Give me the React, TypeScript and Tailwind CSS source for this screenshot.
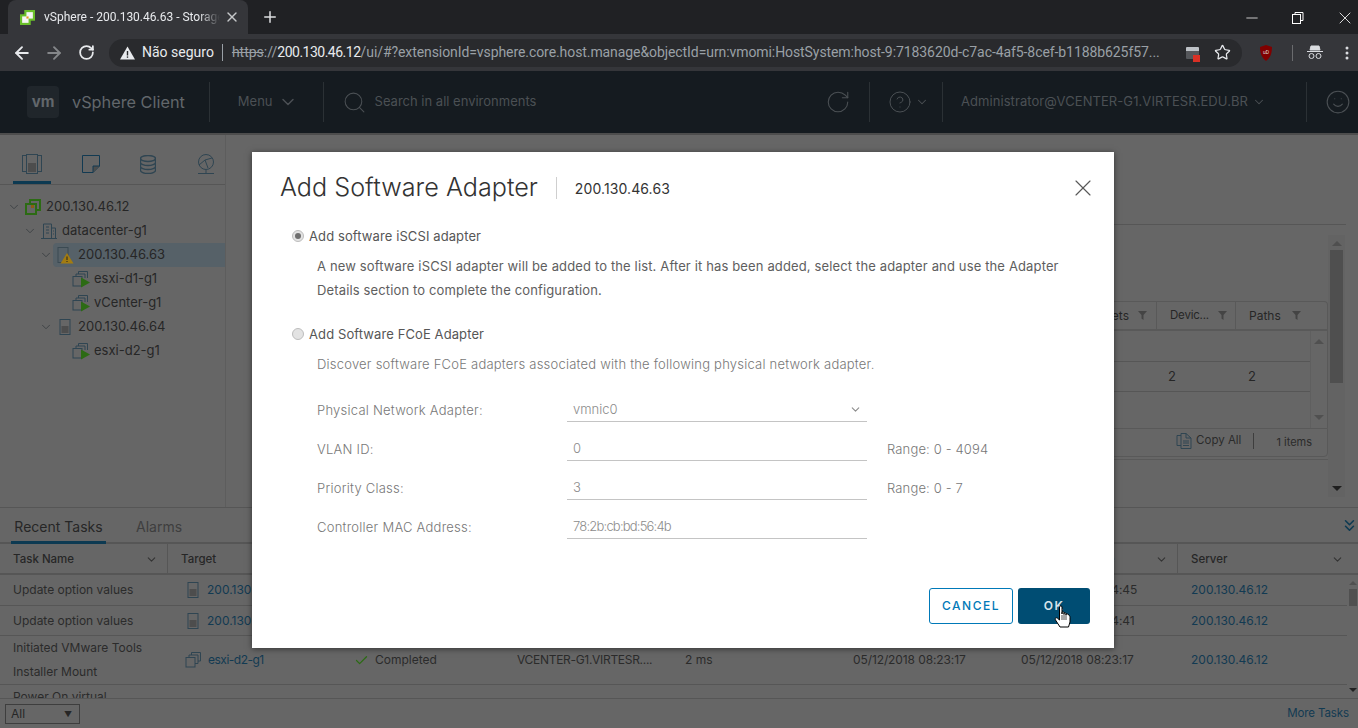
import { ArrowLeft, ArrowRight, RotateCw, Star, ChevronDown, X, Plus, Search, Check, Minus, Smile, HelpCircle, ChevronsDown } from 'lucide-react';

const Server = () => (
    <svg width="12" height="16" viewBox="0 0 12 16" className="shrink-0" fill="none">
        <rect x="1" y="0.5" width="10" height="15" stroke="#2f4552" />
        <rect x="2.5" y="7" width="7" height="7" fill="#4d4d4d" />
    </svg>
);

const Vm = ({ play = true }: { play?: boolean }) => (
    <svg width="18" height="17" viewBox="0 0 18 17" fill="none" className="shrink-0">
        <path d={play ? 'M6.500 3V0.500H15.500V7' : 'M6.500 3V0.500H15.500V9H13'} stroke="#2f4552" />
        <path d={play ? 'M4 5V3H13V7' : 'M4 5V3H13V11.500H10'} stroke="#2f4552" />
        <rect x="1" y="5.500" width="9" height="9.500" stroke="#2f4552" />
        {play && <path d="M9 6.500 L18 11.500 L9 16.500 Z" fill="#2c6b14" />}
    </svg>
);

const FilterIcon = () => (
    <svg width="9" height="9" viewBox="0 0 9 9" className="shrink-0"><path d="M0 0H9L5.500 4V9L3.500 7.500V4Z" fill="#444" /></svg>
);

const TreeRow = ({ indent, chevron, icon, label, selected }: { indent: string; chevron?: boolean; icon: React.ReactNode; label: string; selected?: boolean }) => (
    <div className={`flex h-6 items-center ${indent}`}>
        <span className="flex w-[15px] shrink-0 justify-center">
            {chevron && <ChevronDown size={14} strokeWidth={1.5} className="text-[#3a3f42]" />}
        </span>
        <div className={`flex h-6 flex-1 items-center gap-[4px] rounded-l pl-[3px] ${selected ? 'bg-[#566168]' : ''}`}>
            <span className="flex w-[18px] shrink-0 justify-center">{icon}</span>
            <span className="text-[13px] text-[#262626]">{label}</span>
        </div>
    </div>
);

const HeaderCell = ({ label, width }: { label: string; width: string }) => (
    <div className={`flex h-full items-center justify-between border-r border-[#565656] pl-[13px] pr-[9px] pt-[2px] ${width}`}>
        <span className="text-[11.5px] font-medium text-[#262626]">{label}</span>
        <ChevronDown size={13} className="text-[#333]" />
    </div>
);

const TaskRow = ({ name, name2, target, vm, h, start }: { name: string; name2?: string; target: string; vm?: boolean; h: string; start: string }) => (
    <div className={`flex items-center border-b border-[#565656] text-[12px] text-[#2b2b2b] ${h}`}>
        <div className="w-[168px] shrink-0 pl-[13px] leading-6">
            <div>{name}</div>
            {name2 && <div>{name2}</div>}
        </div>
        <div className={`flex w-[168px] shrink-0 items-center text-[#123a52] ${vm ? 'gap-[5px] pl-[17px] tracking-[-0.5px]' : 'gap-[8px] pl-[19px]'}`}>
            {vm ? <Vm play={false} /> : <Server />}
            <span>{target}</span>
        </div>
        <div className="flex w-[168px] shrink-0 items-center gap-[6px] pl-[18px]">
            <Check size={15} className="text-[#2c6b14]" />
            <span>Completed</span>
        </div>
        <div className="w-[168px] shrink-0 pl-[13px] tracking-[-0.3px]">VCENTER-G1.VIRTESR....</div>
        <div className="w-[168px] shrink-0 pl-[13px]">2 ms</div>
        <div className="w-[168px] shrink-0 pl-[13px] tracking-[-0.1px]">{start}</div>
        <div className="w-[170px] shrink-0 pl-[13px] tracking-[-0.1px]">{start}</div>
        <div className="pl-[13px] text-[#123a52]">200.130.46.12</div>
    </div>
);

const Field = ({ label, value, hint, select, tight }: { label: string; value: string; hint?: string; select?: boolean; tight?: boolean }) => (
    <div className="flex h-[39px] items-center">
        <span className="w-[250px] text-[13px] font-light tracking-[0.24px] text-[#777]">{label}</span>
        <div className={`mt-[-1px] flex h-[23px] w-[300px] items-center justify-between border-b border-[#c4c4c4] pl-[6px] pr-[5px] text-[13px] font-light text-[#8c8c8c] ${tight ? 'tracking-[-0.8px]' : ''}`}>
            {value}
            {select && <ChevronDown size={13} className="text-[#8c8c8c]" />}
        </div>
        {hint && <span className="ml-[20px] text-[13px] font-light tracking-[0.15px] text-[#777]">{hint}</span>}
    </div>
);

const Radio = ({ checked }: { checked?: boolean }) => (
    <span className="mt-[-2px] flex h-3 w-3 items-center justify-center rounded-full border border-[#bdbdbd] bg-[#e3e3e3]">
        {checked && <span className="h-[6px] w-[6px] rounded-full bg-[#6f6f6f]" />}
    </span>
);

const HeaderSep = ({ className }: { className: string }) => <span className={`h-10 w-px bg-[#2b3135] ${className}`} />;

export default function App() {
    return (
        <div className="relative flex h-[728px] w-[1358px] flex-col overflow-hidden bg-[#666666] font-['Inter',sans-serif]">
            {/* browser tab strip */}
            <div className="flex h-[34px] items-start bg-[#202124] pl-[8px]">
                <div className="flex h-[34px] w-[240px] items-center rounded-t-lg bg-[#35363a] pl-[12px] pr-[8px] font-['Roboto',sans-serif]">
                    <svg width="15" height="15" viewBox="0 0 14 14" className="shrink-0">
                        <rect x="4" y="0" width="10" height="10" fill="#6abf2a" />
                        <rect x="0" y="4" width="10" height="10" fill="#6abf2a" />
                        <rect x="6" y="2" width="6" height="6" fill="#f5f5f5" />
                        <rect x="2" y="6" width="6" height="6" fill="#f5f5f5" />
                        <rect x="6" y="6" width="2" height="2" fill="#e39a1c" />
                    </svg>
                    <span className="ml-[9px] w-[176px] overflow-hidden whitespace-nowrap text-[12px] text-[#e8eaed] [mask-image:linear-gradient(to_right,black_88%,transparent)]">vSphere - 200.130.46.63 - Storage</span>
                    <X size={16} className="ml-auto text-[#c6c8ca]" />
                </div>
                <Plus size={18} strokeWidth={2} className="ml-[13px] mt-[8px] text-[#dcdee0]" />
                <div className="ml-auto mt-[8px] flex items-center gap-[30px] pr-[3px] text-white">
                    <Minus size={18} strokeWidth={1} />
                    <svg width="14" height="14" viewBox="0 0 14 14" fill="none" stroke="currentColor"><rect x="1.500" y="3.500" width="8" height="9" /><path d="M4 3.500V1.500h8v8h-2.500" /></svg>
                    <X size={20} strokeWidth={1} />
                </div>
            </div>
            {/* browser toolbar */}
            <div className="flex h-[37px] items-center bg-[#35363a] pl-[12px] font-['Roboto',sans-serif]">
                <ArrowLeft size={20} strokeWidth={2.25} className="text-[#e8eaed]" />
                <ArrowRight size={20} strokeWidth={2.25} className="ml-[12px] text-[#85878a]" />
                <RotateCw size={17} strokeWidth={2.5} className="ml-[14px] text-[#e8eaed]" />
                <div className="ml-[14px] flex h-7 w-[1133px] shrink-0 items-center rounded-full bg-[#292a2d] pl-[11px] text-[14px]">
                    <svg width="15" height="14" viewBox="0 0 15 14" className="shrink-0"><path d="M7.500 0.500 L15 13.500 H0 Z" fill="#e8eaed" /><rect x="6.800" y="5" width="1.400" height="4.500" fill="#292a2d" /><rect x="6.800" y="10.400" width="1.400" height="1.400" fill="#292a2d" /></svg>
                    <span className="ml-[7px] text-[#e8eaed]">Não seguro</span>
                    <span className="ml-[8px] mr-[9px] h-[17px] w-px bg-[#9aa0a6]" />
                    <span className="text-[#9aa0a6] line-through">https</span>
                    <span className="text-[#9aa0a6]">://</span>
                    <span className="tracking-[-0.5px] text-[#e8eaed]">200.130.46.12</span>
                    <span className="w-[803px] overflow-hidden whitespace-nowrap tracking-[-0.08px] text-[#9aa0a6]">/ui/#?extensionId=vsphere.core.host.manage&amp;objectId=urn:vmomi:HostSystem:host-9:7183620d-c7ac-4af5-8cef-b1188b625f57...</span>
                    <span className="relative ml-[22px] h-[12px] w-[13px] shrink-0 rounded-[1px] border-t-[4px] border-[#bdc1c6] bg-[#bdc1c6]/30">
                        <span className="absolute -bottom-[3px] -right-[1px] h-[7px] w-[7px] bg-[#d93025]" />
                    </span>
                    <Star size={17} strokeWidth={1.75} className="ml-[15px] text-[#e8eaed]" />
                </div>
                <svg width="14" height="16" viewBox="0 0 14 16" className="ml-[17px] shrink-0"><path d="M1 2 L7 0 L13 2 C13 9 11 13 7 16 C3 13 1 9 1 2 Z" fill="#800000" /><text x="7" y="9" fontSize="5" fill="#ddd" textAnchor="middle" fontFamily="Roboto, sans-serif">uD</text></svg>
                <span className="ml-[19px] h-[16px] w-px shrink-0 bg-[#6a6b6e]" />
                <svg width="16" height="15" viewBox="0 0 16 15" className="ml-[14px] shrink-0" fill="none" stroke="#dadce0"><path d="M4 1h8l1 4H3z" fill="#dadce0" /><path d="M0 6.500h16" /><circle cx="4.500" cy="11" r="2.500" /><circle cx="11.500" cy="11" r="2.500" /></svg>
                <svg width="4" height="14" viewBox="0 0 4 14" className="ml-[22px] shrink-0" fill="#dadce0"><circle cx="2" cy="2" r="1.500" /><circle cx="2" cy="7" r="1.500" /><circle cx="2" cy="12" r="1.500" /></svg>
            </div>
            {/* dimmed vSphere header */}
            <div className="flex h-[62px] items-center bg-[#151b20] pr-[7px] text-[#4b5054]">
                <div className="ml-[27px] flex h-8 w-[32px] items-center justify-center rounded-sm bg-[#20262b] text-[15px] font-bold text-[#62676b]">vm</div>
                <span className="ml-[13px] text-[16.3px] text-[#62676b]">vSphere Client</span>
                <HeaderSep className="ml-[24px]" />
                <span className="ml-[28px] text-[13px]">Menu</span>
                <ChevronDown size={20} strokeWidth={1.75} className="ml-[5px]" />
                <HeaderSep className="ml-[25px]" />
                <Search size={25} strokeWidth={1} className="ml-[18px]" />
                <span className="ml-[8px] text-[13px]">Search in all environments</span>
                <RotateCw size={26} strokeWidth={1} className="ml-auto" />
                <HeaderSep className="ml-[18px]" />
                <HelpCircle size={24} strokeWidth={1} className="ml-[18px]" />
                <ChevronDown size={14} strokeWidth={1.75} className="ml-[3px]" />
                <HeaderSep className="ml-[13px]" />
                <span className="ml-[18px] text-[13px] tracking-[0.08px]">Administrator@VCENTER-G1.VIRTESR.EDU.BR</span>
                <ChevronDown size={14} strokeWidth={1.75} className="ml-[4px]" />
                <HeaderSep className="ml-[40px]" />
                <Smile size={26} strokeWidth={1} className="ml-[18px]" />
            </div>
            {/* body */}
            <div className="flex h-[374px] border-t-2 border-[#4d4d4d]">
                <aside className="w-[226px] shrink-0 border-r border-[#5d5d5d]">
                    <div className="flex h-[50px] items-end border-b border-[#565656] pl-[13px]">
                        <div className="flex h-[48px] w-[38px] items-center justify-center border-b-[3px] border-[#0d3a52] pt-[10px]">
                            <svg width="20" height="20" viewBox="0 0 20 20" fill="none" stroke="#2f4552"><rect x="0.500" y="1.500" width="19" height="16" /><rect x="4.500" y="0.500" width="11" height="19" fill="#666" /><rect x="6" y="9" width="8" height="9" fill="#4d4d4d" stroke="none" /></svg>
                        </div>
                        <div className="flex h-[48px] w-[58px] items-center justify-center pl-[21px] pt-[8px]">
                            <svg width="18" height="18" viewBox="0 0 18 18" fill="none" stroke="#123a52"><path d="M0.500 0.500H17.500V11L11 17.500H0.500Z" /><path d="M11 17.500V11H17.500" fill="#4d4d4d" /></svg>
                        </div>
                        <div className="flex h-[48px] w-[58px] items-center justify-center pl-[20px] pt-[8px]">
                            <svg width="16" height="19" viewBox="0 0 16 19" fill="none" stroke="#2f4552" strokeWidth="1.400"><ellipse cx="8" cy="3.500" rx="7.500" ry="3" /><path d="M0.500 3.500V15.500C0.500 17 4 18.500 8 18.500S15.500 17 15.500 15.500V3.500M0.500 7.500C0.500 9 4 10.500 8 10.500S15.500 9 15.500 7.500M0.500 11.500C0.500 13 4 14.500 8 14.500S15.500 13 15.500 11.500" /></svg>
                        </div>
                        <div className="flex h-[48px] w-[58px] items-center justify-center pl-[20px] pt-[8px]">
                            <svg width="18" height="20" viewBox="0 0 18 20" fill="none" stroke="#2f4552"><circle cx="9" cy="8" r="7.500" /><path d="M2 11L8 6L15 4M8 6L11 14" /><path d="M9 16V19M1 19.500H17" /></svg>
                        </div>
                    </div>
                    <div className="pt-[10px]">
                        <TreeRow indent="pl-[6px]" chevron label="200.130.46.12" icon={<svg width="16" height="16" viewBox="0 0 16 16" fill="none"><rect x="5" y="1" width="10" height="10" stroke="#2c6b14" strokeWidth="2" /><rect x="1" y="5" width="10" height="10" stroke="#2c6b14" strokeWidth="2" fill="#666" /><rect x="6" y="6" width="3" height="3" fill="#8d5c12" /></svg>} />
                        <TreeRow indent="pl-[22px]" chevron label="datacenter-g1" icon={<svg width="16" height="16" viewBox="0 0 16 16" fill="none" stroke="#2f4552"><path d="M2.500 15V1H10.500V15M10.500 5H14.500V15M0 15.500H16M5 4H8M5 7H8M5 10H8M12 8H13M12 11H13" /></svg>} />
                        <TreeRow indent="pl-[38px]" chevron selected label="200.130.46.63" icon={<svg width="17" height="17" viewBox="0 0 17 17" fill="none"><rect x="1" y="0.500" width="10" height="15" stroke="#3b4a52" /><path d="M10 6L16.500 16.500H3.500Z" fill="#a37c10" /><path d="M10 9.500V13M10 14V15" stroke="#222" /></svg>} />
                        <TreeRow indent="pl-[54px]" label="esxi-d1-g1" icon={<Vm />} />
                        <TreeRow indent="pl-[54px]" label="vCenter-g1" icon={<Vm />} />
                        <TreeRow indent="pl-[38px]" chevron label="200.130.46.64" icon={<Server />} />
                        <TreeRow indent="pl-[54px]" label="esxi-d2-g1" icon={<Vm />} />
                    </div>
                </aside>
                <main className="flex min-w-0 flex-1 flex-col">
                    <div className="ml-[30px] mr-[12px] h-[90px] shrink-0 border-b border-[#565656]" />
                    <div className="flex flex-1">
                        <div className="w-[1102px] shrink-0 pl-[40px] pt-[76px]">
                            <div className="flex h-[30px] justify-end rounded-t border border-b-2 border-[#595959] text-[12px] text-[#262626]">
                                <span className="flex h-full w-[200px] items-center justify-end gap-[9px] border-r border-[#595959] pr-[9px]">Targets <FilterIcon /></span>
                                <span className="flex h-full w-[79px] items-center gap-[9px] border-r border-[#595959] pl-[13px] text-[11.5px] tracking-[-0.2px]">Devic... <FilterIcon /></span>
                                <span className="flex h-full w-[91px] items-center gap-[11px] pl-[13px]">Paths <FilterIcon /></span>
                            </div>
                            <div className="flex h-[97px] border-x border-[#595959]">
                                <div className="min-w-0 flex-1 text-[13px] text-[#262626]">
                                    <div className="h-[31px] border-b border-[#565656]" />
                                    <div className="flex h-[30px] items-center justify-end border-b border-[#565656]">
                                        <span className="w-[79px] pl-[11px]">2</span>
                                        <span className="w-[74px] pl-[12px]">2</span>
                                    </div>
                                </div>
                                <div className="flex w-[17px] flex-col items-center justify-between border-l border-[#5f5f5f] py-[8px]">
                                    <span className="h-0 w-0 border-x-[5px] border-b-[5px] border-x-transparent border-b-[#505050]" />
                                    <span className="h-0 w-0 border-x-[5px] border-t-[5px] border-x-transparent border-t-[#505050]" />
                                </div>
                            </div>
                            <div className="flex h-[29px] items-center justify-end rounded-b border border-[#595959] text-[12px] text-[#2b2b2b]">
                                <svg width="16" height="16" viewBox="0 0 16 16" fill="none" stroke="#2f4552" className="mb-[3px] shrink-0"><path d="M5 2.500H1V12.500H5" /><path d="M5 0.500H10L15 5V15.500H5Z" /><path d="M10 0.500V5H15M7 8H13M7 10H13M7 12.500H13" /></svg>
                                <span className="mb-[3px] ml-[4px] text-[11.5px]">Copy All</span>
                                <span className="mb-[3px] ml-[12px] h-4 w-px bg-[#3e3e3e]" />
                                <span className="ml-[22px] mr-[15px] text-[11px]">1 items</span>
                            </div>
                            <div className="mt-[2px] border-t border-[#595959]" />
                        </div>
                        <div className="my-[10px] flex w-[17px] flex-col items-center justify-between bg-[#636363] py-[6px]">
                            <span className="h-0 w-0 border-x-[5px] border-b-[5px] border-x-transparent border-b-[#4f4f4f]" />
                            <span className="mb-auto mt-[4px] h-[133px] w-[13px] bg-[#4f4f4f]" />
                            <span className="h-0 w-0 border-x-[5px] border-t-[5px] border-x-transparent border-t-[#1f1f1f]" />
                        </div>
                    </div>
                </main>
            </div>
            {/* recent tasks */}
            <section className="flex-1 border-t border-[#565656]">
                <div className="flex h-[36px] items-end border-b-2 border-[#565656]">
                    <span className="-mb-[2px] ml-[11px] flex h-[36px] w-[95px] items-center justify-center whitespace-nowrap border-b-[3px] border-[#0d3a52] pt-[4px] text-[14px] text-[#262626]">Recent Tasks</span>
                    <span className="ml-[30px] flex h-[36px] items-center pt-[4px] text-[14px] text-[#3e3e3e]">Alarms</span>
                    <ChevronsDown size={19} className="mb-[7px] ml-auto mr-[-1px] text-[#0d3a52]" />
                </div>
                <div className="flex h-[31px] items-center border-b-2 border-[#565656]">
                    <HeaderCell label="Task Name" width="w-[168px]" />
                    <HeaderCell label="Target" width="w-[168px]" />
                    <HeaderCell label="Status" width="w-[168px]" />
                    <HeaderCell label="Initiator" width="w-[168px]" />
                    <HeaderCell label="Queued For" width="w-[168px]" />
                    <HeaderCell label="Start Time" width="w-[168px]" />
                    <HeaderCell label="Completion Time" width="w-[170px]" />
                    <div className="flex h-full flex-1 items-center justify-between pl-[13px] pr-[14px] pt-[2px]">
                        <span className="text-[11.5px] font-medium text-[#262626]">Server</span>
                        <ChevronDown size={13} className="text-[#333]" />
                    </div>
                </div>
                <div className="flex h-[123px]">
                    <div className="min-w-0 flex-1 overflow-hidden">
                        <TaskRow h="h-[31px]" name="Update option values" target="200.130.46.63" start="05/12/2018 08:24:45" />
                        <TaskRow h="h-[30px]" name="Update option values" target="200.130.46.63" start="05/12/2018 08:24:41" />
                        <TaskRow h="h-[49px]" name="Initiated VMware Tools" name2="Installer Mount" target="esxi-d2-g1" vm start="05/12/2018 08:23:17" />
                        <div className="pl-[13px] text-[12px] leading-6 text-[#2b2b2b]">Power On virtual</div>
                    </div>
                    <div className="flex w-[11px] flex-col items-center justify-between py-[6px]">
                        <span className="h-0 w-0 border-x-[4px] border-b-[4px] border-x-transparent border-b-[#505050]" />
                        <span className="mb-auto mt-[4px] h-[17px] w-[8px] bg-[#505050]" />
                        <span className="h-0 w-0 border-x-[4px] border-t-[4px] border-x-transparent border-t-[#222]" />
                    </div>
                </div>
                <div className="flex h-[30px] items-center justify-between border-t border-[#565656] pl-[5px] pr-[9px]">
                    <div className="flex h-5 w-[75px] items-center justify-between border border-[#3e3e3e] pl-[5px] pr-[7px] text-[12px] text-[#262626]">All <span className="text-[8px]">▼</span></div>
                    <span className="text-[11.5px] tracking-[-0.1px] text-[#123a52]">More Tasks</span>
                </div>
            </section>
            {/* modal */}
            <div className="pointer-events-none absolute left-[252px] top-[152px] flex h-[496px] w-[862px] flex-col bg-white pl-[28px] pr-[24px] shadow-[0_1px_6px_rgba(0,0,0,0.5)]">
                <div className="flex h-[72px] items-center">
                    <h1 className="text-[25.200px] font-light text-[#333]">Add Software Adapter</h1>
                    <span className="mx-[18px] h-[22px] w-px bg-[#cfcfcf]" />
                    <span className="text-[14px] tracking-[0.1px] text-[#333]">200.130.46.63</span>
                    <X size={28} strokeWidth={1} className="ml-auto mr-[-7px] text-[#595959]" />
                </div>
                <div className="pl-[12px]">
                    <label className="mt-[1px] flex h-6 items-center gap-[5px] text-[13px] tracking-[0.1px] text-[#565656]"><Radio checked />Add software iSCSI adapter</label>
                    <p className="mt-[5px] w-[775px] pl-[25px] text-[13px] leading-6 tracking-[0.14px] text-[#5e5e5e]">A new software iSCSI adapter will be added to the list. After it has been added, select the adapter and use the Adapter Details section to complete the configuration.</p>
                    <label className="mt-[21px] flex h-6 items-center gap-[5px] text-[13px] tracking-[0.1px] text-[#565656]"><Radio />Add Software FCoE Adapter</label>
                    <p className="mt-[5px] whitespace-nowrap pl-[25px] text-[13px] font-light leading-6 tracking-[0.22px] text-[#777]">Discover software FCoE adapters associated with the following physical network adapter.</p>
                    <div className="mt-[15px] pl-[25px]">
                        <Field label="Physical Network Adapter:" value="vmnic0" select />
                        <Field label="VLAN ID:" value="0" hint="Range: 0 - 4094" />
                        <Field label="Priority Class:" value="3" hint="Range: 0 - 7" />
                        <Field label="Controller MAC Address:" value="78:2b:cb:bd:56:4b" tight />
                    </div>
                </div>
                <div className="mb-[24px] mt-auto flex justify-end gap-[5px]">
                    <div className="flex h-[36px] w-[84px] items-center justify-center rounded-[3px] border border-[#0079b8] text-[12px] font-medium tracking-[1.5px] text-[#0079b8]">CANCEL</div>
                    <div className="relative flex h-[36px] w-[72px] items-center justify-center rounded-[3px] bg-[#004d73] text-[12px] font-semibold tracking-[1.5px] text-[#d9e4ea]">
                        OK
                        <svg width="17" height="23" viewBox="0 0 17 23" className="absolute left-[36px] top-[17px]"><path d="M5.500 2C5.500 0.500 8 0.500 8 2V9V7.500C8 6.500 10 6.500 10 7.500V9.500V8.500C10 7.500 12 7.500 12 8.500V10V9.500C12 8.500 14 8.500 14 9.500C15.500 10 16 11 16 12.500V17L14.500 22H6L1.500 15C0.500 13 2.500 12 3.800 13.500L5.500 15Z" fill="#fff" stroke="#000" strokeLinejoin="round" /><path d="M8 10V15M10 10V15M12 10V15" stroke="#000" strokeWidth="0.700" /></svg>
                    </div>
                </div>
            </div>
        </div>
    );
}
